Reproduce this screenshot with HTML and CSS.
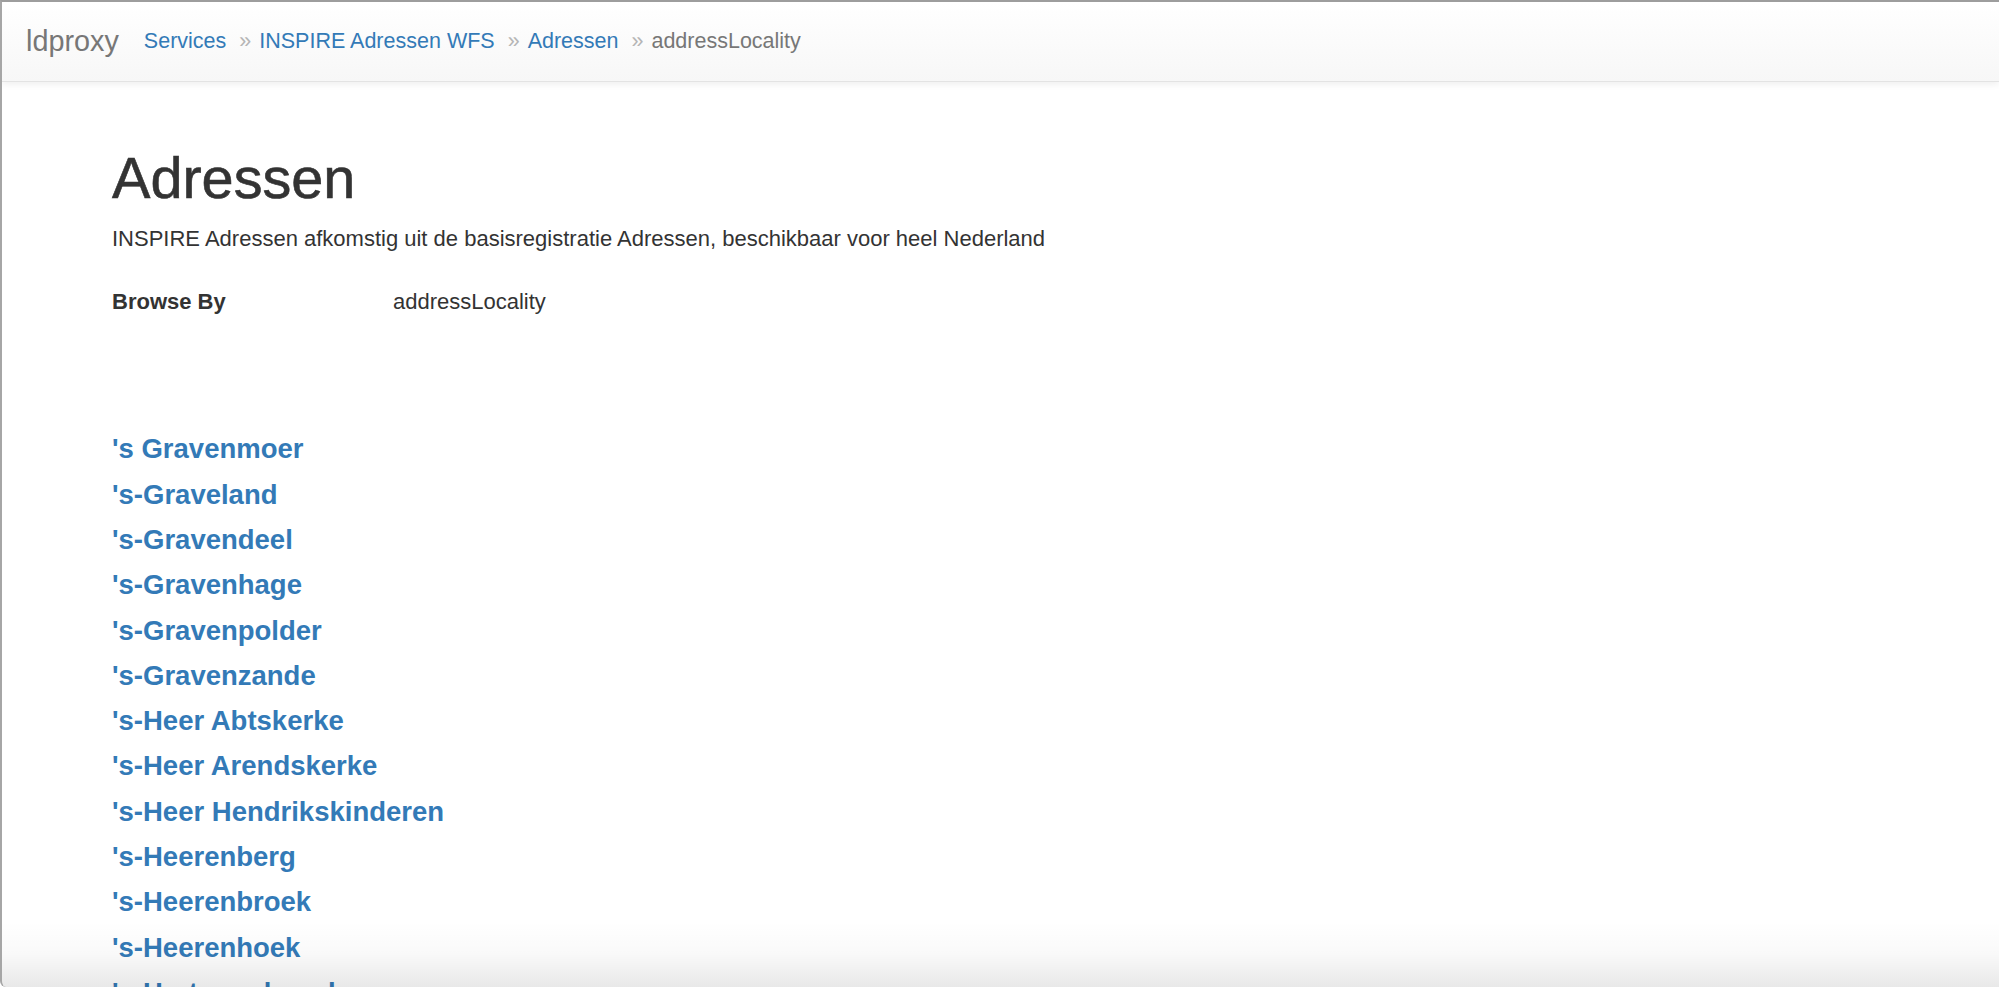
FILE: index.html
```html
<!DOCTYPE html>
<html lang="nl">
<head>
<meta charset="utf-8">
<title>Adressen - addressLocality</title>
<link rel="stylesheet" href="styles.css">
</head>
<body>
<div class="window">
  <nav class="navbar">
    <span class="brand">ldproxy</span>
    <ol class="breadcrumb">
      <li><a href="#">Services</a></li>
      <li><a href="#">INSPIRE Adressen WFS</a></li>
      <li><a href="#">Adressen</a></li>
      <li class="active">addressLocality</li>
    </ol>
  </nav>
  <main class="content">
    <h1 class="title">Adressen</h1>
    <p class="description">INSPIRE Adressen afkomstig uit de basisregistratie Adressen, beschikbaar voor heel Nederland</p>
    <dl class="props">
      <dt>Browse By</dt>
      <dd>addressLocality</dd>
    </dl>
    <ul class="values">
      <li><a href="#">'s Gravenmoer</a></li>
      <li><a href="#">'s-Graveland</a></li>
      <li><a href="#">'s-Gravendeel</a></li>
      <li><a href="#">'s-Gravenhage</a></li>
      <li><a href="#">'s-Gravenpolder</a></li>
      <li><a href="#">'s-Gravenzande</a></li>
      <li><a href="#">'s-Heer Abtskerke</a></li>
      <li><a href="#">'s-Heer Arendskerke</a></li>
      <li><a href="#">'s-Heer Hendrikskinderen</a></li>
      <li><a href="#">'s-Heerenberg</a></li>
      <li><a href="#">'s-Heerenbroek</a></li>
      <li><a href="#">'s-Heerenhoek</a></li>
      <li><a href="#">'s-Hertogenbosch</a></li>
    </ul>
  </main>
  <div class="bottom-shade"></div>
</div>
</body>
</html>
```
FILE: styles.css
```css
html, body {
  margin: 0;
  padding: 0;
  height: 100%;
  overflow: hidden;
  background: #fff;
}
body {
  font-family: "Liberation Sans", Arial, Helvetica, sans-serif;
  color: #333;
}
.window {
  height: 987px;
  box-sizing: border-box;
  border-top: 2px solid #9d9d9d;
  border-left: 2px solid #a6a6a6;
  border-bottom-left-radius: 6px;
  overflow: hidden;
  position: relative;
  background: #fff;
}
.navbar {
  display: flex;
  align-items: center;
  height: 80px;
  box-sizing: border-box;
  padding-left: 24px;
  background: linear-gradient(to bottom, #ffffff 0%, #f7f7f7 100%);
  border-bottom: 1px solid #e3e3e3;
  box-shadow: 0 2px 7px rgba(0, 0, 0, 0.07);
  position: relative;
}
.brand {
  font-size: 28.8px;
  color: #777;
  margin-right: 25px;
}
.breadcrumb {
  display: flex;
  list-style: none;
  margin: 0;
  padding: 0;
  font-size: 21.5px;
}
.breadcrumb li + li::before {
  content: "\00bb";
  color: #b5b5b5;
  padding: 0 8px 0 13px;
}
.breadcrumb a {
  color: #337ab7;
  text-decoration: none;
}
.breadcrumb .active {
  color: #777;
}
.content {
  padding: 65px 0 0 110px;
}
.title {
  margin: 0;
  font-size: 57.6px;
  line-height: 1.1;
  font-weight: 400;
  color: #333;
  -webkit-text-stroke: 0.6px #333;
}
.description {
  margin: 13px 0 0;
  font-size: 22px;
  line-height: 32px;
}
.props {
  display: flex;
  margin: 31px 0 0;
  font-size: 22px;
  line-height: 32px;
}
.props dt {
  font-weight: 700;
  width: 281px;
}
.props dd {
  margin: 0;
}
.values {
  list-style: none;
  margin: 108px 0 0;
  padding: 0;
}
.values li {
  font-size: 27.5px;
  line-height: 45.3px;
  font-weight: 700;
}
.values a {
  color: #337ab7;
  text-decoration: none;
}
.bottom-shade {
  position: absolute;
  left: 0;
  right: 0;
  bottom: 0;
  height: 66px;
  background: linear-gradient(to bottom, rgba(0,0,0,0) 0%, rgba(0,0,0,0.025) 50%, rgba(0,0,0,0.09) 100%);
  pointer-events: none;
}
```
